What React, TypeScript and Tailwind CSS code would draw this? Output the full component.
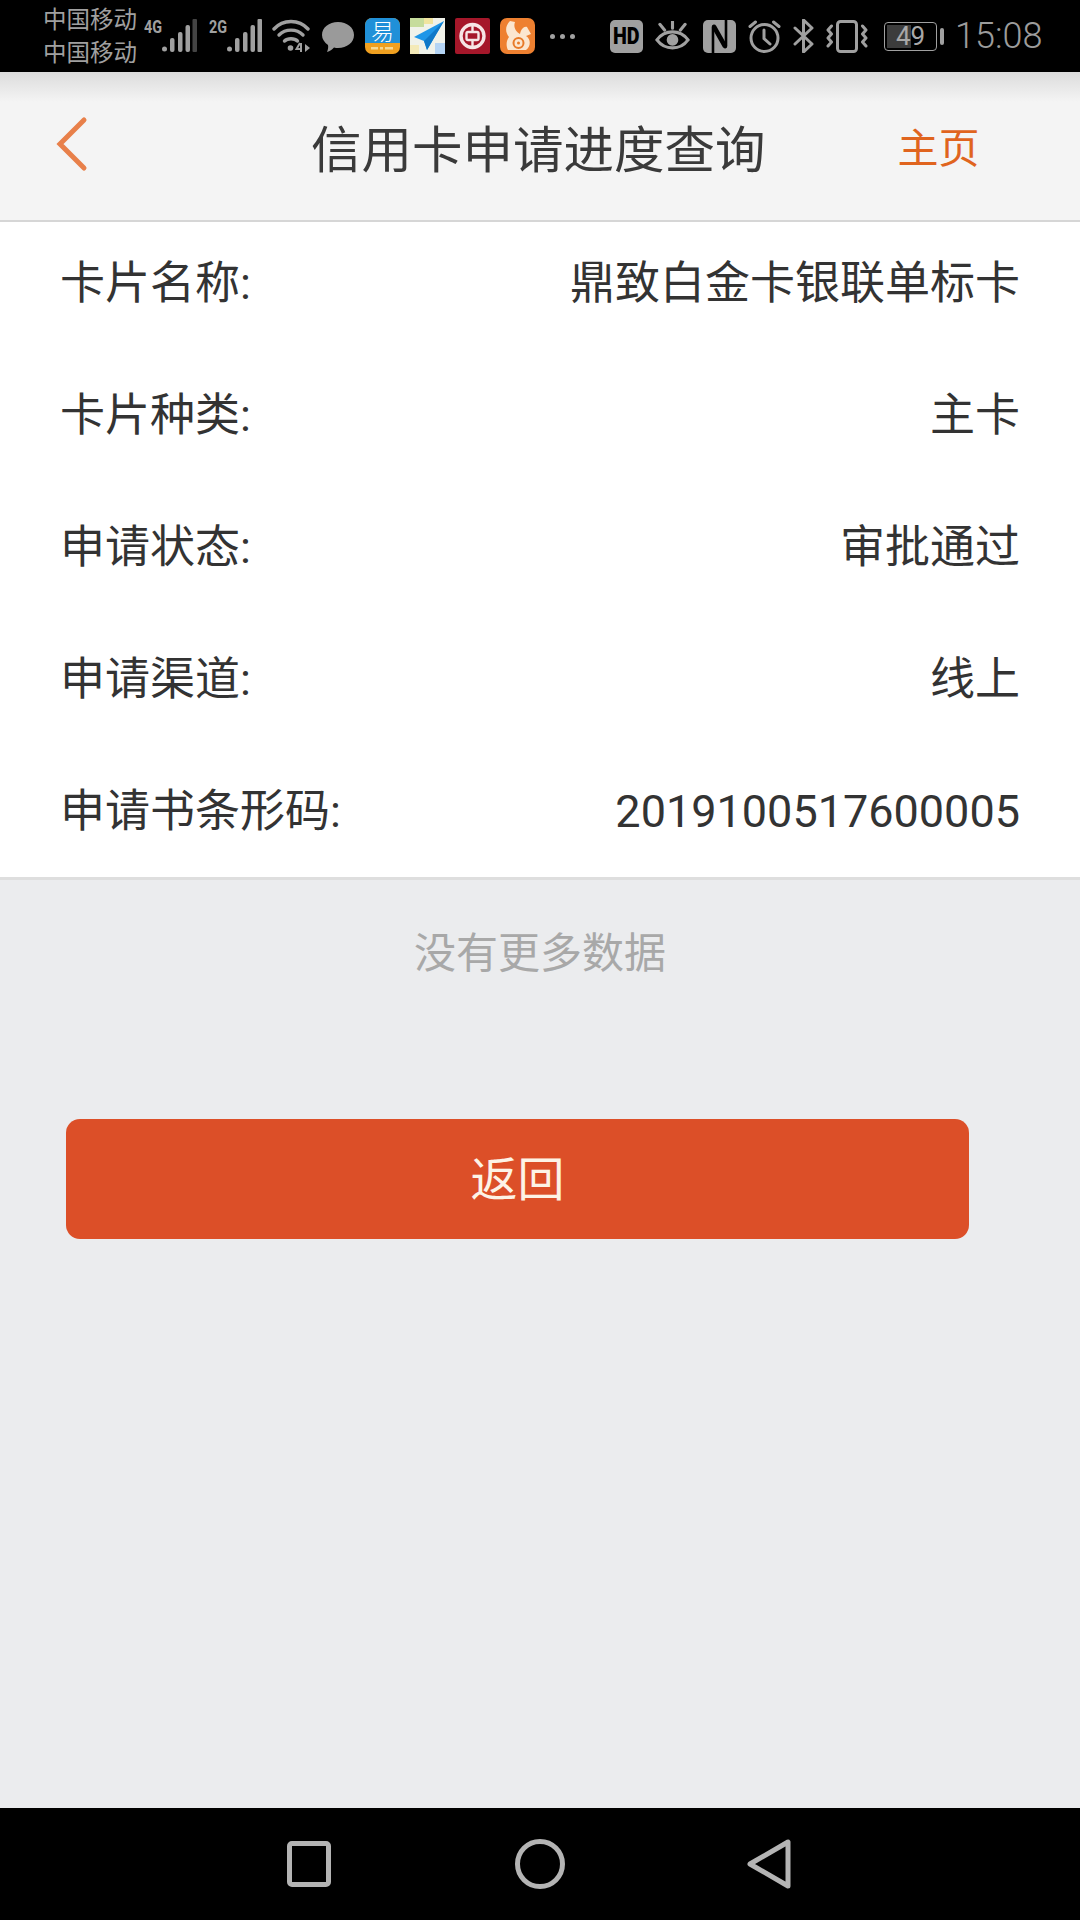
const CJK = "font-['Roboto','Noto_Sans_CJK_SC',sans-serif]";

const rows = [
  ['卡片名称:', '鼎致白金卡银联单标卡'],
  ['卡片种类:', '主卡'],
  ['申请状态:', '审批通过'],
  ['申请渠道:', '线上'],
  ['申请书条形码:', '2019100517600005'],
];

function Signal({ label, dim }: { label: string; dim?: boolean }) {
  return (
    <div className="relative w-[53px] h-[36px]">
      <span className="absolute left-0 top-0 text-[18px] leading-[18px] font-bold text-[#a0a0a0] font-['Roboto',sans-serif] scale-x-[0.8] origin-left">
        {label}
      </span>
      <svg className="absolute right-0 top-0" width="35" height="36" viewBox="0 0 35 36">
        <circle cx="2.500" cy="31" r="2.500" fill="#a0a0a0" />
        <rect x="8" y="20" width="4.500" height="14" rx="2" fill="#a0a0a0" />
        <rect x="16" y="14" width="4.500" height="20" rx="2" fill="#a0a0a0" />
        <rect x="23.500" y="7" width="4.500" height="27" rx="2" fill="#a0a0a0" />
        <rect x="30.500" y="1" width="4.500" height="33" rx="1" fill={dim ? '#444444' : '#a0a0a0'} />
      </svg>
    </div>
  );
}

function Wifi() {
  return (
    <svg width="38" height="34" viewBox="0 0 38 34" fill="none" stroke="#a0a0a0" strokeWidth="3.400" strokeLinecap="round">
      <path d="M2 10C11 0 27 0 36 10" />
      <path d="M7 16C13.500 9.500 24.500 9.500 31 16" />
      <path d="M12.500 22C15.500 19 22.500 19 25.500 22" />
      <circle cx="18.500" cy="29" r="2.800" fill="#a0a0a0" stroke="none" />
      <path d="M28 24L24.500 30H29.500M29 24V33" strokeWidth="2" strokeLinecap="butt" />
      <path d="M33 25L38 29L33 33Z" fill="#a0a0a0" stroke="none" />
    </svg>
  );
}

function Bubble() {
  return (
    <svg width="32" height="30" viewBox="0 0 32 30">
      <path d="M16 0C25 0 32 5.500 32 13C32 20.500 25 26 16 26C14.500 26 13.500 26 12 25.500C10 27.500 8 29 5 30C6 28 6.500 25 6 23C2.500 20.500 0 17 0 13C0 5.500 7 0 16 0Z" fill="#9a9a9a" />
    </svg>
  );
}

function AppYi() {
  return (
    <svg width="35" height="36" viewBox="0 0 35 36">
      <rect width="35" height="36" rx="7" fill="#f0a020" />
      <path d="M0 7A7 7 0 0 1 7 0H28A7 7 0 0 1 35 7V25H0Z" fill="#2090d8" />
      <text x="17.500" y="22" textAnchor="middle" fontSize="23" fontWeight="300" fill="#ffffff" fontFamily="'Noto Sans CJK SC',sans-serif">易</text>
      <rect x="6" y="29" width="7" height="2.500" fill="#f8d890" />
      <rect x="15" y="29" width="3" height="2.500" fill="#f8d890" />
      <rect x="20" y="29" width="8" height="2.500" fill="#f8d890" />
    </svg>
  );
}

function AppMap() {
  return (
    <svg width="35" height="36" viewBox="0 0 35 36">
      <rect width="35" height="36" fill="#f0f2ea" />
      <rect x="0" y="0" width="14" height="9" fill="#c6dc9c" />
      <rect x="14" y="0" width="9" height="6" fill="#f0e4a0" />
      <rect x="25" y="25" width="10" height="11" fill="#b4d4f4" />
      <rect x="0" y="27" width="9" height="9" fill="#f4eab8" />
      <path d="M34 3L4 19L14 23L17 32Z" fill="#1e96e8" />
      <path d="M34 3L14 23L17 32Z" fill="#0f78c8" />
    </svg>
  );
}

function AppBank() {
  return (
    <svg width="35" height="36" viewBox="0 0 35 36">
      <rect width="35" height="36" rx="2" fill="#a5172a" />
      <circle cx="17.500" cy="18" r="11.500" fill="none" stroke="#f6e6e6" strokeWidth="3.400" />
      <rect x="11.500" y="14" width="12" height="8" rx="1.500" fill="none" stroke="#f6e6e6" strokeWidth="2.400" />
      <rect x="16.300" y="7" width="2.400" height="7" fill="#f6e6e6" />
      <rect x="16.300" y="22" width="2.400" height="7" fill="#f6e6e6" />
    </svg>
  );
}

function AppUc() {
  return (
    <svg width="35" height="36" viewBox="0 0 35 36">
      <rect width="35" height="36" rx="7" fill="#ee8030" />
      <path d="M10 3C5 8 5 14 9 19C6 23 6 28 8 32H26C31 28 31 21 26 18L31 16L27 9C24 8 21 11 20 16C16 14 13 9 15 4Z" fill="#fbe6cf" />
      <circle cx="18.500" cy="25" r="5" fill="none" stroke="#e87a28" strokeWidth="2" />
      <circle cx="18.500" cy="25" r="1.500" fill="#e87a28" />
    </svg>
  );
}

function Hd() {
  return (
    <div className="w-[33px] h-[33px] rounded-[5px] bg-[#a0a0a0] flex items-center justify-center">
      <span className="text-black text-[24px] leading-[24px] font-black font-['Roboto',sans-serif] scale-x-[0.82]">HD</span>
    </div>
  );
}

function Eye() {
  return (
    <svg width="35" height="30" viewBox="0 0 36 30" fill="none" stroke="#a0a0a0" strokeWidth="3.200">
      <path d="M2 19C10 8 26 8 34 19C26 30 10 30 2 19Z" />
      <circle cx="18" cy="19" r="6" fill="#a0a0a0" stroke="none" />
      <path d="M18 0V7M5 3L10 9M31 3L26 9" strokeLinecap="round" />
    </svg>
  );
}

function Nfc() {
  return (
    <svg width="33" height="33" viewBox="0 0 33 33" fill="none">
      <rect width="33" height="33" rx="5" fill="#a0a0a0" />
      <path d="M10 33V7C10 5.500 11.500 5.500 12 6.500L23 26" stroke="#000000" strokeWidth="2.600" />
      <path d="M23 0V26C23 27.500 21.500 27.500 21 26.500L10 7" stroke="#000000" strokeWidth="2.600" />
    </svg>
  );
}

function Alarm() {
  return (
    <svg width="33" height="33" viewBox="0 0 33 33" fill="none" stroke="#a0a0a0" strokeWidth="3" strokeLinecap="round">
      <circle cx="16.500" cy="18" r="13.500" />
      <path d="M16 10V18.500L22 24M2 6.500L7.500 2M31 6.500L25.500 2" />
    </svg>
  );
}

function Bluetooth() {
  return (
    <svg width="21" height="34" viewBox="0 0 21 34" fill="none" stroke="#a0a0a0" strokeWidth="3" strokeLinecap="round" strokeLinejoin="round">
      <path d="M2 9L19 25L10.500 33V1L19 9L2 25" />
    </svg>
  );
}

function Vibrate() {
  return (
    <svg width="42" height="33" viewBox="0 0 42 33" fill="none" stroke="#a0a0a0" strokeWidth="3" strokeLinecap="round" strokeLinejoin="round">
      <rect x="11.500" y="1.500" width="19" height="30" rx="3" />
      <path d="M5.500 6L2 10L5.500 14L2 18L5.500 22L2 26" />
      <path d="M36.500 6L40 10L36.500 14L40 18L36.500 22L40 26" />
    </svg>
  );
}

function Battery() {
  return (
    <div className="flex items-center gap-[3px]">
      <div className="relative w-[53px] h-[29px] rounded-[4px] border border-[#a0a0a0] p-[2px]">
        <div className="w-[24px] h-full bg-[#3c3c3c]" />
        <span className="absolute inset-0 flex items-center justify-center text-[26px] leading-[27px] text-[#a8a8a8] font-['Roboto',sans-serif]">
          49
        </span>
      </div>
      <div className="w-[4px] h-[17px] rounded-[2px] bg-[#a0a0a0]" />
    </div>
  );
}

function StatusBar() {
  return (
    <div className="h-[72px] shrink-0 bg-black flex items-center pl-[43px]">
      <div className={`w-[94px] pt-[2px] text-[23.500px] leading-[33px] text-[#a0a0a0] whitespace-nowrap ${CJK}`}>
        <div>中国移动</div>
        <div>中国移动</div>
      </div>
      <div className="ml-[7px]"><Signal label="4G" dim /></div>
      <div className="ml-[12px]"><Signal label="2G" /></div>
      <div className="ml-[10px]"><Wifi /></div>
      <div className="ml-[12px] mt-[2px]"><Bubble /></div>
      <div className="ml-[11px]"><AppYi /></div>
      <div className="ml-[10px]"><AppMap /></div>
      <div className="ml-[10px]"><AppBank /></div>
      <div className="ml-[10px]"><AppUc /></div>
      <div className="ml-[15px] flex gap-[5px]">
        <span className="w-[5px] h-[5px] rounded-full bg-[#a0a0a0]" />
        <span className="w-[5px] h-[5px] rounded-full bg-[#a0a0a0]" />
        <span className="w-[5px] h-[5px] rounded-full bg-[#a0a0a0]" />
      </div>
      <div className="ml-[35px]"><Hd /></div>
      <div className="ml-[12px]"><Eye /></div>
      <div className="ml-[13px]"><Nfc /></div>
      <div className="ml-[12px]"><Alarm /></div>
      <div className="ml-[12px]"><Bluetooth /></div>
      <div className="ml-[12px]"><Vibrate /></div>
      <div className="ml-[16px]"><Battery /></div>
      <div className="ml-[11px] text-[36px] leading-[40px] text-[#9c9c9c] font-['Roboto',sans-serif] font-light">15:08</div>
    </div>
  );
}

export default function App() {
  return (
    <div className={`w-[1080px] h-[1920px] flex flex-col bg-[#ebecee] ${CJK}`}>
      <StatusBar />

      {/* header */}
      <div className="h-[150px] shrink-0 flex items-center pl-[56px] border-b-2 border-[#d6d6d6] bg-[linear-gradient(#dcdcdc,#f4f4f4_30px)]">
        <svg className="-mt-[4px]" width="34" height="56" viewBox="0 0 34 56" fill="none" stroke="#e8804a" strokeWidth="5" strokeLinecap="round">
          <path d="M28 4L4 28L28 52" />
        </svg>
        <div className="ml-[221px] mt-[9px] text-[50.500px] leading-[60px] text-[#3a3a3a]">信用卡申请进度查询</div>
        <div className="ml-[132px] mt-[5px] text-[41px] leading-[50px] text-[#e0641e]">主页</div>
      </div>

      {/* details */}
      <div className="flex flex-col gap-[72px] pt-[32px] pb-[35px] px-[60px] bg-white border-b-[3px] border-[#dedede]">
        {rows.map(([label, value]) => (
          <div key={label} className="flex justify-between h-[60px] text-[45px] leading-[60px] text-[#333333]">
            <span>{label}</span>
            <span>{value}</span>
          </div>
        ))}
      </div>

      <div className="mt-[44px] text-center text-[42px] leading-[60px] text-[#a8a8a8]">没有更多数据</div>

      <div className="mt-[135px] ml-[66px] w-[903px] h-[120px] pt-[3px] rounded-[14px] bg-[#dc4f28] flex items-center justify-center text-[47px] text-[#fdf3e6]">
        返回
      </div>

      <div className="flex-1" />

      {/* nav bar */}
      <div className="h-[112px] shrink-0 bg-black flex items-center pl-[287px]">
        <svg width="44" height="46" viewBox="0 0 44 46" fill="none" stroke="#b4b4b4" strokeWidth="5">
          <rect x="2.500" y="2.500" width="39" height="41" rx="2.500" />
        </svg>
        <svg className="ml-[184px]" width="50" height="50" viewBox="0 0 50 50" fill="none" stroke="#b4b4b4" strokeWidth="5">
          <circle cx="25" cy="25" r="22.500" />
        </svg>
        <svg className="ml-[182px]" width="44" height="50" viewBox="0 0 44 50" fill="none" stroke="#b4b4b4" strokeWidth="5" strokeLinejoin="round">
          <path d="M41 3V47L3 25Z" />
        </svg>
      </div>
    </div>
  );
}
